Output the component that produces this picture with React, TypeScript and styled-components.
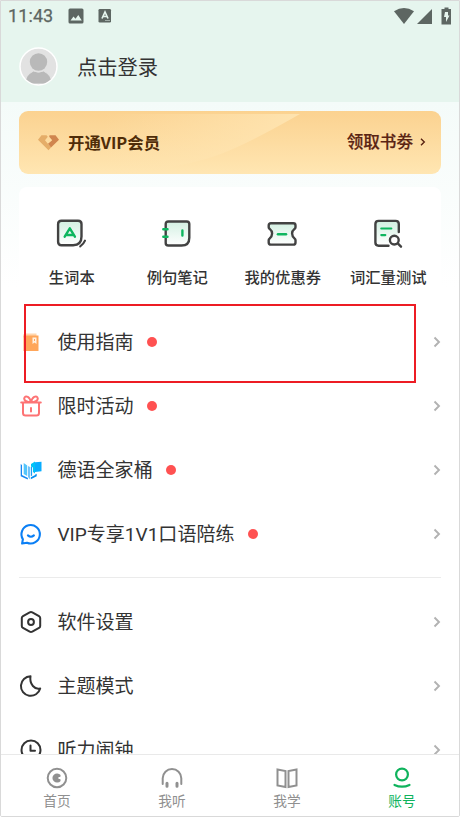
import React from "react";
import styled, { createGlobalStyle } from "styled-components";

const Global = createGlobalStyle`
  * { box-sizing: border-box; }
  body { margin: 0; background: #fff; }
`;

const Screen = styled.div`
  position: relative;
  width: 460px;
  height: 817px;
  display: flex;
  flex-direction: column;
  overflow: hidden;
  border: 1px solid #d9d9d9;
  border-radius: 0 0 2px 2px;
  background: #fff;
  color: #333;
  font-family: Roboto, "Noto Sans CJK SC", sans-serif;
  svg { display: block; flex: none; overflow: visible; }
`;

const Header = styled.header`
  flex: none;
  height: 101px;
  background: #e6f5ee;
`;

const StatusBar = styled.div`
  height: 29px;
  display: flex;
  align-items: center;
  padding: 0 6px 0 7px;
  color: #5d6662;
`;

const Clock = styled.span`
  width: 60px;
  font-size: 18px;
  line-height: 28px;
  font-weight: 400;
  letter-spacing: 0.1px;
  -webkit-text-stroke: 0.25px currentColor;
`;

const StatusGroup = styled.div<{ $gap: number; $end?: boolean }>`
  display: flex;
  align-items: center;
  gap: ${(p) => p.$gap}px;
  margin-left: ${(p) => (p.$end ? "auto" : "0")};
`;

const Profile = styled.div`
  height: 72px;
  display: flex;
  align-items: center;
  gap: 19px;
  padding: 0 18px;
`;

const LoginText = styled.span`
  padding-top: 3px;
  font-size: 20.3px;
  line-height: 30px;
`;

const Content = styled.main`
  flex: 1;
  min-height: 0;
  overflow: hidden;
  padding: 9px 18px 0;
  background: linear-gradient(#f4fbf9 0, #fff 185px);
`;

const VipBanner = styled.section`
  position: relative;
  overflow: hidden;
  height: 63px;
  display: flex;
  align-items: center;
  border-radius: 9px;
  padding: 0 15px 0 19px;
  background: linear-gradient(#fbd290, #ffe6b2);
`;

const Shine = styled.svg`
  position: absolute;
  left: 0;
  top: 0;
`;

const VipTitle = styled.span`
  position: relative;
  margin-left: 9px;
  font-size: 16.4px;
  line-height: 24px;
  padding-bottom: 1px;
  font-weight: 700;
  font-family: "Noto Sans CJK SC", sans-serif;
  color: #4f2c08;
`;

const Coupon = styled.span`
  position: relative;
  display: flex;
  align-items: center;
  gap: 7px;
  margin-left: auto;
  padding-top: 1px;
  font-size: 16.6px;
  line-height: 24px;
  font-weight: 500;
  color: #5a2413;
  -webkit-text-stroke: 0.2px currentColor;
  svg { margin-bottom: 2px; }
`;

const Shortcuts = styled.nav`
  display: grid;
  grid-template-columns: repeat(4, 1fr);
  height: 118px;
  margin-top: 13px;
  padding-top: 29.5px;
  border-radius: 8px;
  background: #fff;
`;

const Shortcut = styled.div`
  display: flex;
  flex-direction: column;
  align-items: center;
  gap: 17.5px;
  font-size: 15.3px;
  line-height: 24px;
  font-weight: 500;
  white-space: nowrap;
  svg { margin-right: 1px; }
`;

const Menu = styled.ul`
  list-style: none;
  margin: 0;
  padding: 4.5px 0 0;
`;

const MenuRow = styled.li`
  display: flex;
  align-items: center;
  height: 64px;
  font-size: 19.05px;
  line-height: 28px;
`;

const MenuIcon = styled.span`
  width: 24px;
  margin: 0 15px 0 -0.5px;
`;

const MenuLabel = styled.span`
  padding-top: 2px;
`;

const Dot = styled.i`
  width: 10px;
  height: 10px;
  margin-left: 13.5px;
  border-radius: 50%;
  background: #ff5151;
`;

const Push = styled.span`
  margin: 0 -1px 0 auto;
`;

const Divider = styled.hr`
  height: 1px;
  border: 0;
  margin: 11.5px 0 7.5px;
  background: #ebebeb;
`;

const TabBar = styled.footer`
  flex: none;
  height: 62px;
  display: grid;
  grid-template-columns: repeat(4, 115px);
  border-top: 1px solid #e9e9e9;
  background: #fff;
`;

const Tab = styled.div<{ $active?: boolean }>`
  display: flex;
  flex-direction: column;
  align-items: center;
  padding: 11px 3px 0 0;
  gap: 1px;
  font-size: 13.7px;
  line-height: 20px;
  color: ${(p) => (p.$active ? "#0fb35d" : "#909090")};
`;

/* Spotlight frame drawn over the first menu entry. */
const Highlight = styled.div`
  position: absolute;
  left: 23px;
  top: 303px;
  width: 392px;
  height: 79px;
  border: 2px solid #ed1c24;
  pointer-events: none;
`;

const Chevron = () => (
  <svg width="9" height="12" viewBox="0 0 9 12" fill="none" stroke="#b2b2b2" strokeWidth="1.9">
    <path d="M1.5 1.5 6 6 1.5 10.5" />
  </svg>
);

const Gradient = ({ id }: { id: string }) => (
  <defs>
    <linearGradient id={id} x1="0" y1="0" x2="0" y2="1">
      <stop offset="0" stopColor="#d3f0e2" />
      <stop offset="1" stopColor="#fff" />
    </linearGradient>
  </defs>
);

const line = { fill: "none", strokeLinecap: "round", strokeLinejoin: "round" } as const;

const WordBookIcon = () => (
  <svg width="32" height="32" viewBox="0 0 32 32" {...line} stroke="#424242" strokeWidth="2.4">
    <Gradient id="g1" />
    <path fill="url(#g1)" d="M6.500 3.700h16.600q3.400 0 3.400 3.400v12.500q0 8.600-8.400 8.600H6.500q-3.400 0-3.400-3.400V7.100Q3.100 3.700 6.500 3.700Z" />
    <path strokeWidth="2.1" d="M30 23.700q-1.300 3.300-4.800 5.600" />
    <path stroke="#0eb65f" strokeWidth="2.4" d="M9.700 19.700 14.800 11.300 19.900 19.700M11.500 18h6.600" />
  </svg>
);

const NotesIcon = () => (
  <svg width="32" height="32" viewBox="0 0 32 32" {...line} stroke="#424242" strokeWidth="2.4">
    <Gradient id="g2" />
    <path fill="url(#g2)" d="M7.300 4.500h18.400q2.600 0 2.600 2.600v13.600q0 7.800-7.800 7.800H7.300q-2.600 0-2.600-2.600V7.100Q4.700 4.500 7.300 4.500Z" />
    <path stroke="#0eb65f" strokeWidth="2.4" d="M2.300 12.200H6.500M2.300 19.800H6.500M21.400 13.500v5" />
  </svg>
);

const TicketIcon = () => (
  <svg width="32" height="32" viewBox="0 0 32 32" {...line} stroke="#424242" strokeWidth="2.4">
    <Gradient id="g3" />
    <path fill="url(#g3)" d="M4.900 6.200h22.400q2.200 0 2.200 2.200v1.800q0 1-1 1.700c-3.200 2.500-3.200 6.800 0 9.500q1 .7 1 1.700v2.300q0 2.200-2.200 2.200H4.900q-2.200 0-2.200-2.200v-2.300q0-1 1-1.700c3.200-2.700 3.200-7 0-9.500q-1-.7-1-1.700V8.400q0-2.200 2.200-2.200Z" />
    <path stroke="#0eb65f" strokeWidth="2.600" d="M12 17.200h8" />
  </svg>
);

const TestIcon = () => (
  <svg width="32" height="32" viewBox="0 0 32 32" {...line} stroke="#424242" strokeWidth="2.4">
    <Gradient id="g4" />
    <path stroke="none" fill="url(#g4)" d="M4 5h22v12l-9 11H4Z" />
    <path d="M16.500 28.700H6.600q-3.200 0-3.200-3.200V7.100q0-3.200 3.200-3.200h17q3.200 0 3.200 3.200v8" />
    <path stroke="#0eb65f" strokeWidth="2.200" d="M9.300 11.500h10M9.300 18.100h4" />
    <circle cx="22.300" cy="23.100" r="4.400" fill="#fff" />
    <path d="m26 26.700 3 3" />
  </svg>
);

const GuideIcon = () => (
  <svg width="24" height="24" viewBox="0 0 24 24">
    <path fill="#ffd6ad" d="M5.500 3.500H17.500v4H4.500v-3Z" />
    <path fill="#ffa65a" d="M4.500 5.500h15v15.500h-15Z" />
    <path fill="#fff1e3" d="M13.500 7.500h4v6.500l-2-1.500-2 1.500Z" />
    <path fill="#ffa65a" d="M15 8.900h1v2h-1Z" />
  </svg>
);

const GiftIcon = () => (
  <svg width="24" height="24" viewBox="0 0 24 24" {...line} stroke="#fd7374" strokeWidth="2">
    <path d="M2.200 8.500h19.600M4 9v10q0 2.600 2.600 2.600h10.800Q20 21.600 20 19V9M12 14v3.500M12 8.500Q5 7.500 5.200 4.500 5.800 1.600 8.800 2.900 11.300 4.300 12 8.500 12.700 4.300 15.200 2.900 18.200 1.600 18.800 4.500 19 7.500 12 8.500" />
  </svg>
);

const BooksIcon = () => (
  <svg width="24" height="24" viewBox="0 0 24 24">
    <path fill="#1687f3" d="M1.700 6 3 7v10l6 3-.3 1.500L1.700 18.200Z" />
    <path fill="#54c5fb" d="m4.700 5 3.500 2.500v10.500l-3.500-2Z" />
    <path fill="#35a9f7" d="M9.300 8 10.700 9v12.500L9.300 19Z" />
    <path fill="#078ff2" d="m16.200 16.500 1.500-.8v2.600L11.800 21.300v-2l4.400-2.200Z" />
    <path fill="#1d9cf5" d="m11.800 9 1.300-.5v9l-1.300.8Z" />
    <path fill="#00c3f7" d="m12 6 4-2.500v12l-2-1.500V9.500L12 8.500Z" />
    <path fill="#08adff" d="m16 4.300 6.500-.6v9.500l-6.500.8Z" />
  </svg>
);

const ChatIcon = () => (
  <svg width="24" height="24" viewBox="0 0 24 24" {...line} stroke="#0a7ff5" strokeWidth="2.1">
    <path d="M3.900 17.200A9.200 9.200 0 1 1 8 20.700L3.100 21.500Z" />
    <path d="M8.900 13.400q3 2.700 6 0" />
  </svg>
);

const SettingsIcon = () => (
  <svg width="24" height="24" viewBox="0 0 24 24" {...line} stroke="#333" strokeWidth="2">
    <path d="m10.700 2.300-6.700 3.800q-1.200.7-1.200 2v7.800q0 1.300 1.200 2l6.700 3.800q1.300.7 2.600 0l6.700-3.800q1.200-.7 1.200-2V8.100q0-1.300-1.200-2l-6.700-3.800q-1.300-.7-2.600 0Z" />
    <circle cx="12" cy="12" r="2.900" />
  </svg>
);

const MoonIcon = () => (
  <svg width="24" height="24" viewBox="0 0 24 24" {...line} stroke="#333" strokeWidth="2">
    <path d="M11.500 2.200A9.800 9.800 0 1 0 21.200 14.500C16 16 10.200 10.500 11.500 2.200Z" />
  </svg>
);

const ClockIcon = () => (
  <svg width="24" height="24" viewBox="0 0 24 24" {...line} stroke="#333" strokeWidth="2">
    <circle cx="12" cy="12" r="9.500" />
    <path d="M11.500 7.500v5.200h4.500" />
  </svg>
);

const HomeTabIcon = () => (
  <svg width="24" height="24" viewBox="0 0 24 24" fill="none" stroke="currentColor" strokeWidth="2">
    <circle cx="12" cy="12" r="9.300" />
    <path fill="currentColor" stroke="none" d="M15.600 9.100A4.600 4.600 0 1 0 15.600 14.900L15.300 13h-1.800v-2h1.800Z" />
  </svg>
);

const ListenTabIcon = () => (
  <svg width="24" height="24" viewBox="0 0 24 24" {...line} stroke="currentColor" strokeWidth="2">
    <path d="M2.700 18v-5.700a9.300 9.300 0 0 1 18.600 0V18" />
    <path strokeWidth="3" d="M7 17.300v3M17 17.300v3" />
  </svg>
);

const LearnTabIcon = () => (
  <svg width="24" height="24" viewBox="0 0 24 24" fill="none" stroke="currentColor" strokeWidth="2">
    <path d="M2.500 3.500 10.500 5v16l-8-1.600ZM21.500 3.500 13.500 5v16l8-1.600Z" />
  </svg>
);

const AccountTabIcon = () => (
  <svg width="24" height="24" viewBox="0 0 24 24" fill="none" stroke="currentColor" strokeWidth="2.200">
    <circle cx="12" cy="8.500" r="5.900" />
    <path strokeLinecap="round" d="M4.500 18.900q7.500 3.500 15 0" />
  </svg>
);

const shortcuts = [
  { label: "生词本", Icon: WordBookIcon },
  { label: "例句笔记", Icon: NotesIcon },
  { label: "我的优惠券", Icon: TicketIcon },
  { label: "词汇量测试", Icon: TestIcon },
];

const featured = [
  { label: "使用指南", Icon: GuideIcon },
  { label: "限时活动", Icon: GiftIcon },
  { label: "德语全家桶", Icon: BooksIcon },
  { label: "VIP专享1V1口语陪练", Icon: ChatIcon },
];

const settings = [
  { label: "软件设置", Icon: SettingsIcon },
  { label: "主题模式", Icon: MoonIcon },
  { label: "听力闹钟", Icon: ClockIcon },
];

const tabs = [
  { label: "首页", Icon: HomeTabIcon },
  { label: "我听", Icon: ListenTabIcon },
  { label: "我学", Icon: LearnTabIcon },
  { label: "账号", Icon: AccountTabIcon, active: true },
];

type Entry = { label: string; Icon: () => React.ReactElement };

const Row = ({ entry, dot }: { entry: Entry; dot?: boolean }) => (
  <MenuRow>
    <MenuIcon><entry.Icon /></MenuIcon>
    <MenuLabel>{entry.label}</MenuLabel>
    {dot && <Dot />}
    <Push><Chevron /></Push>
  </MenuRow>
);

export default function App() {
  return (
    <>
      <Global />
      <Screen>
        <Header>
          <StatusBar>
            <Clock>11:43</Clock>
            <StatusGroup $gap={14}>
              <svg width="16" height="16" viewBox="0 0 16 16">
                <rect x=".5" y=".5" width="15" height="15" rx="1.500" fill="currentColor" />
                <path fill="#e6f5ee" d="m2.500 12.500 3-4 2 2.200L10.300 7l3.500 5.500Z" />
              </svg>
              <svg width="14" height="16" viewBox="0 0 14 16">
                <rect x=".5" y="1" width="12.500" height="13.500" rx="1.300" fill="currentColor" />
                <path fill="none" stroke="#e6f5ee" strokeWidth="1.700" d="M4 10.500 7 4l3 6.500M5 8.500h4" />
                <path stroke="#e6f5ee" strokeDasharray="1 1" d="M7.500 12.500H12" />
              </svg>
            </StatusGroup>
            <StatusGroup $gap={3} $end>
              <svg width="20" height="16" viewBox="0 0 20 16">
                <path fill="currentColor" d="M-1 3.300Q9-3.100 19 3.300L9 16Z" />
              </svg>
              <svg width="16" height="16" viewBox="0 0 16 16">
                <path fill="currentColor" d="M14 1v15H-1Z" />
              </svg>
              <svg width="16" height="18" viewBox="0 0 16 18">
                <path fill="currentColor" d="M7.500 2V.5h4V2H14v15.500H4.500V2Z" />
                <path fill="#e6f5ee" d="M8 5h3v3.500h1.500L9 15v-5H7Z" />
              </svg>
            </StatusGroup>
          </StatusBar>
          <Profile>
            <svg width="39" height="39" viewBox="0 0 39 39">
              <clipPath id="face"><circle cx="19.500" cy="19.500" r="17.800" /></clipPath>
              <circle cx="19.500" cy="19.500" r="18.500" fill="#e2e2e2" stroke="#fff" strokeWidth="1.500" />
              <g fill="#b9b9b9" clipPath="url(#face)">
                <circle cx="19.500" cy="15" r="8.700" />
                <path stroke="#e2e2e2" d="M6 37q0-9 8.500-13 5 2.400 10 0Q33 28 33 37Z" />
              </g>
            </svg>
            <LoginText>点击登录</LoginText>
          </Profile>
        </Header>
        <Content>
          <VipBanner>
            <Shine width="422" height="63" viewBox="0 0 422 63">
              <defs>
                <linearGradient id="shine">
                  <stop offset="0.3" stopColor="#ffe4b0" stopOpacity="0" />
                  <stop offset="1" stopColor="#ffe6b4" stopOpacity=".85" />
                </linearGradient>
              </defs>
              <path fill="url(#shine)" d="M0 3H281Q220 38 190 47T110 63H0Z" />
            </Shine>
            <svg width="21" height="16" viewBox="0 0 21 16">
              <path fill="#e5ad68" d="M3.500.2H8.500L9.800 1.800 7 5.200 13 12.600 10.500 15.300 0 4.800Z" />
              <path fill="#d0854e" d="M11.500.2H17.500L21 4.800 13 12.600 10 8.800 14.200 5.200 11.200 1.800Z" />
            </svg>
            <VipTitle>开通VIP会员</VipTitle>
            <Coupon>
              领取书劵
              <svg width="6" height="8" viewBox="0 0 6 8" fill="none" stroke="currentColor" strokeWidth="1.400">
                <path d="m1 .7 3.300 3.300L1 7.300" />
              </svg>
            </Coupon>
          </VipBanner>
          <Shortcuts>
            {shortcuts.map(({ label, Icon }) => (
              <Shortcut key={label}><Icon />{label}</Shortcut>
            ))}
          </Shortcuts>
          <Menu>
            {featured.map((e) => <Row key={e.label} entry={e} dot />)}
          </Menu>
          <Divider />
          <Menu>
            {settings.map((e) => <Row key={e.label} entry={e} />)}
          </Menu>
        </Content>
        <TabBar>
          {tabs.map(({ label, Icon, active }) => (
            <Tab key={label} $active={active}><Icon />{label}</Tab>
          ))}
        </TabBar>
        <Highlight />
      </Screen>
    </>
  );
}
